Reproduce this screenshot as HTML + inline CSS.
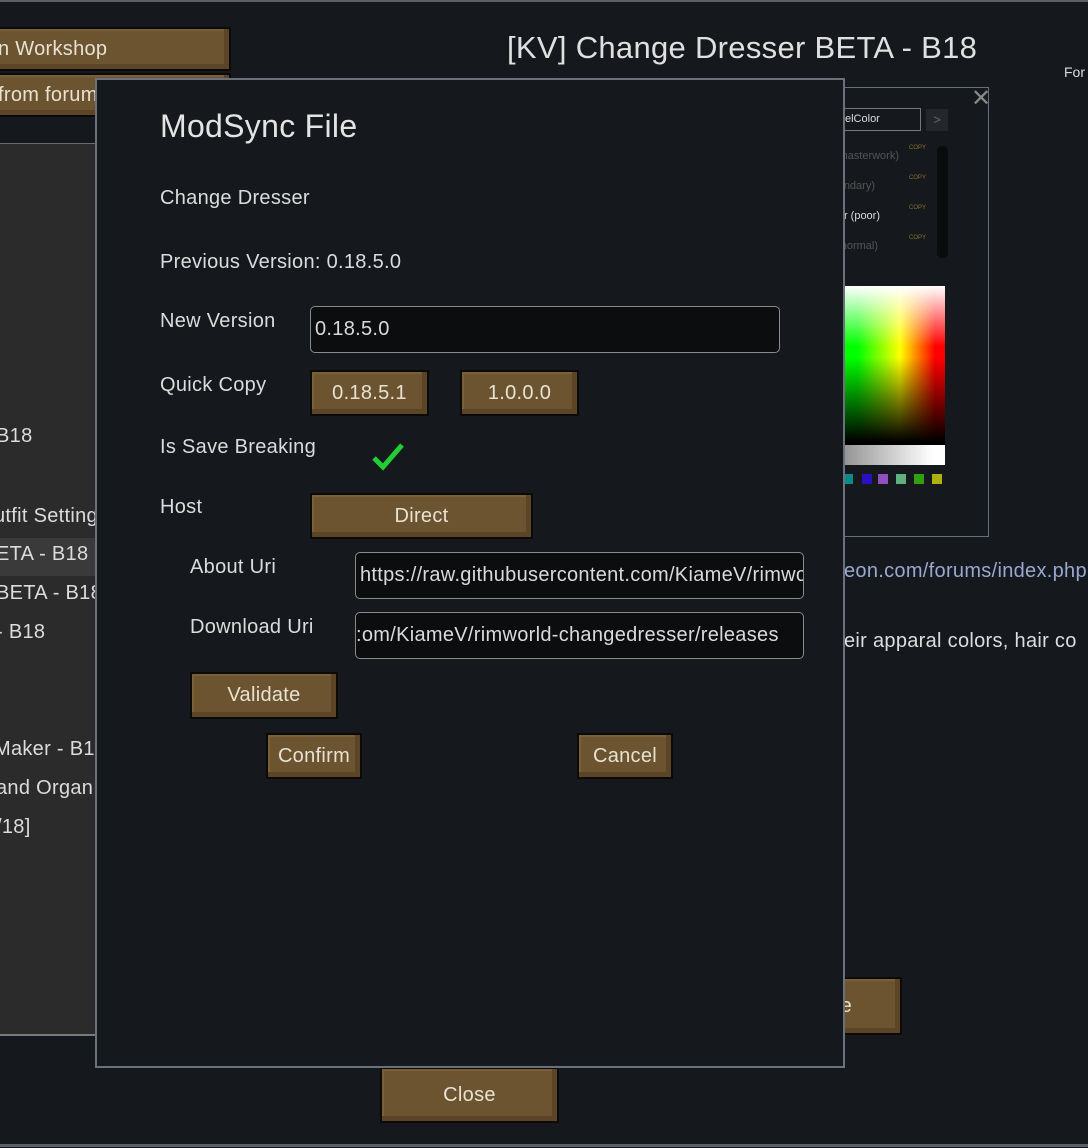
<!DOCTYPE html>
<html><head><meta charset="utf-8"><style>
*{margin:0;padding:0;box-sizing:border-box}
body{width:1088px;height:1148px;background:#15181d;position:relative;overflow:hidden;font-family:"Liberation Sans",sans-serif;color:#dcdcdc}
.a{position:absolute;white-space:nowrap}
.btn{position:absolute;background:#6c5430;border:2px solid #0c0a07;box-shadow:inset -5px -5px 0 #5b4526, inset 2px 2px 0 #7a6038;color:#e8e2d2;font-size:20px;letter-spacing:0.3px;display:flex;align-items:center;justify-content:center;overflow:hidden;white-space:nowrap}
.inp{position:absolute;background:#0c0d0f;border:1.5px solid #8a8a8a;border-radius:5px;color:#dadada;font-size:20px;letter-spacing:0.3px;display:flex;align-items:center;padding-left:4px;overflow:hidden;white-space:nowrap}
.lbl{position:absolute;font-size:20px;letter-spacing:0.3px;color:#dcdcdc;white-space:nowrap}
.r{position:absolute;font-size:11px;text-align:right;white-space:nowrap}
</style></head><body>
<div class="a" style="left:0;top:0;width:1088px;height:2px;background:#5a606a"></div>
<div class="a" style="left:0;top:1144px;width:1088px;height:3px;background:#5a606a"></div>

<div class="btn" style="left:-10px;top:27px;width:241px;height:44px;justify-content:flex-start;padding-left:6px">n Workshop</div>
<div class="btn" style="left:-10px;top:73px;width:241px;height:44px;justify-content:flex-start;padding-left:6px">from forum</div>

<div class="a" style="left:0;top:143px;width:96px;height:893px;background:#2b2b2c;border-top:1px solid #6a6a6a;border-bottom:2px solid #7a7a7a"></div>
<div class="a" style="left:0;top:538px;width:96px;height:38px;background:#3a3a3b"></div>
<div class="lbl" style="left:-4px;top:425px">B18</div>
<div class="lbl" style="left:-6px;top:505px">utfit Setting</div>
<div class="lbl" style="left:-4px;top:543px">ETA - B18</div>
<div class="lbl" style="left:-4px;top:582px">BETA - B18</div>
<div class="lbl" style="left:-4px;top:621px">- B18</div>
<div class="lbl" style="left:-6px;top:738px">Maker - B18</div>
<div class="lbl" style="left:-4px;top:777px">and Organ</div>
<div class="lbl" style="left:-4px;top:816px">/18]</div>

<div class="a" style="left:507px;top:30px;font-size:31px;letter-spacing:0.3px;color:#e0e0e0">[KV] Change Dresser BETA - B18</div>
<div class="a" style="left:1064px;top:64px;font-size:14px;color:#ddd">For</div>

<div class="a" style="left:820px;top:87px;width:169px;height:450px;border:1.5px solid #6a707a;background:#15181d"></div>
<div class="a" style="left:971px;top:84px;font-size:24px;color:#888">✕</div>
<div class="a" style="left:820px;top:108px;width:101px;height:23px;border:1.5px solid #777;font-size:11px;color:#ddd;padding:4px 0 0 24px">elColor</div>
<div class="a" style="left:926px;top:109px;width:22px;height:22px;background:#23262b;color:#666;font-size:13px;text-align:center;line-height:22px">&gt;</div>
<div class="r" style="right:189px;top:150px;color:#555">(masterwork)</div>
<div class="r" style="right:213px;top:180px;color:#555">(legendary)</div>
<div class="r" style="right:208px;top:210px;color:#ddd">r (poor)</div>
<div class="r" style="right:210px;top:240px;color:#555">(normal)</div>
<div class="a" style="left:909px;top:145px;font-size:6px;color:#8a7030">COPY</div>
<div class="a" style="left:909px;top:175px;font-size:6px;color:#8a7030">COPY</div>
<div class="a" style="left:909px;top:205px;font-size:6px;color:#8a7030">COPY</div>
<div class="a" style="left:909px;top:235px;font-size:6px;color:#8a7030">COPY</div>
<div class="a" style="left:937px;top:146px;width:11px;height:112px;border-radius:5px;background:#0a0b0c"></div>
<div class="a" style="left:820px;top:286px;width:125px;height:159px;background:linear-gradient(to bottom,rgba(0,0,0,0) 45%,#000 98%),linear-gradient(to right,#0f0 30%,#ff0 64%,#f00 92%)"></div>
<div class="a" style="left:820px;top:286px;width:125px;height:159px;background:linear-gradient(to bottom,rgba(255,255,255,1),rgba(255,255,255,0) 38%)"></div>
<div class="a" style="left:820px;top:445px;width:125px;height:20px;background:linear-gradient(to right,#777,#fff 90%)"></div>
<div class="a" style="left:845px;top:474px;width:8px;height:10px;background:#0a8a88"></div>
<div class="a" style="left:862px;top:474px;width:10px;height:10px;background:#2a10c0"></div>
<div class="a" style="left:878px;top:474px;width:10px;height:10px;background:#9050c0"></div>
<div class="a" style="left:896px;top:474px;width:10px;height:10px;background:#60b080"></div>
<div class="a" style="left:914px;top:474px;width:10px;height:10px;background:#30a010"></div>
<div class="a" style="left:932px;top:474px;width:10px;height:10px;background:#b0b010"></div>

<div class="a" style="left:844px;top:560px;font-size:20px;letter-spacing:0.3px;color:#9aa8d0">eon.com/forums/index.php</div>
<div class="a" style="left:844px;top:630px;font-size:20px;letter-spacing:0.3px;color:#ddd">eir apparal colors, hair co</div>

<div class="btn" style="left:820px;top:977px;width:82px;height:58px;justify-content:flex-end;padding-right:48px">e</div>
<div class="btn" style="left:380px;top:1067px;width:179px;height:56px">Close</div>

<div class="a" style="left:95px;top:78px;width:750px;height:990px;background:#15181d;border:2px solid #6a707c"></div>
<div class="a" style="left:160px;top:108px;font-size:32px;letter-spacing:0.3px;color:#e4e4e4">ModSync File</div>
<div class="lbl" style="left:160px;top:187px">Change Dresser</div>
<div class="lbl" style="left:160px;top:251px">Previous Version: 0.18.5.0</div>
<div class="lbl" style="left:160px;top:310px">New Version</div>
<div class="inp" style="left:310px;top:306px;width:470px;height:47px">0.18.5.0</div>
<div class="lbl" style="left:160px;top:374px">Quick Copy</div>
<div class="btn" style="left:310px;top:370px;width:119px;height:46px">0.18.5.1</div>
<div class="btn" style="left:460px;top:370px;width:119px;height:46px">1.0.0.0</div>
<div class="lbl" style="left:160px;top:436px">Is Save Breaking</div>
<svg class="a" style="left:370px;top:440px" width="36" height="32" viewBox="0 0 36 32"><path d="M4 18 L13 27 L32 5" stroke="#22cc33" stroke-width="5" fill="none"/></svg>
<div class="lbl" style="left:160px;top:496px">Host</div>
<div class="btn" style="left:310px;top:493px;width:223px;height:46px">Direct</div>
<div class="lbl" style="left:190px;top:556px">About Uri</div>
<div class="inp" style="left:355px;top:552px;width:449px;height:47px">https://raw.githubusercontent.com/KiameV/rimworld</div>
<div class="lbl" style="left:190px;top:616px">Download Uri</div>
<div class="inp" style="left:355px;top:612px;width:449px;height:47px;padding-left:0">:om/KiameV/rimworld-changedresser/releases</div>
<div class="btn" style="left:190px;top:672px;width:148px;height:47px">Validate</div>
<div class="btn" style="left:266px;top:733px;width:96px;height:46px">Confirm</div>
<div class="btn" style="left:577px;top:733px;width:96px;height:46px">Cancel</div>
</body></html>
